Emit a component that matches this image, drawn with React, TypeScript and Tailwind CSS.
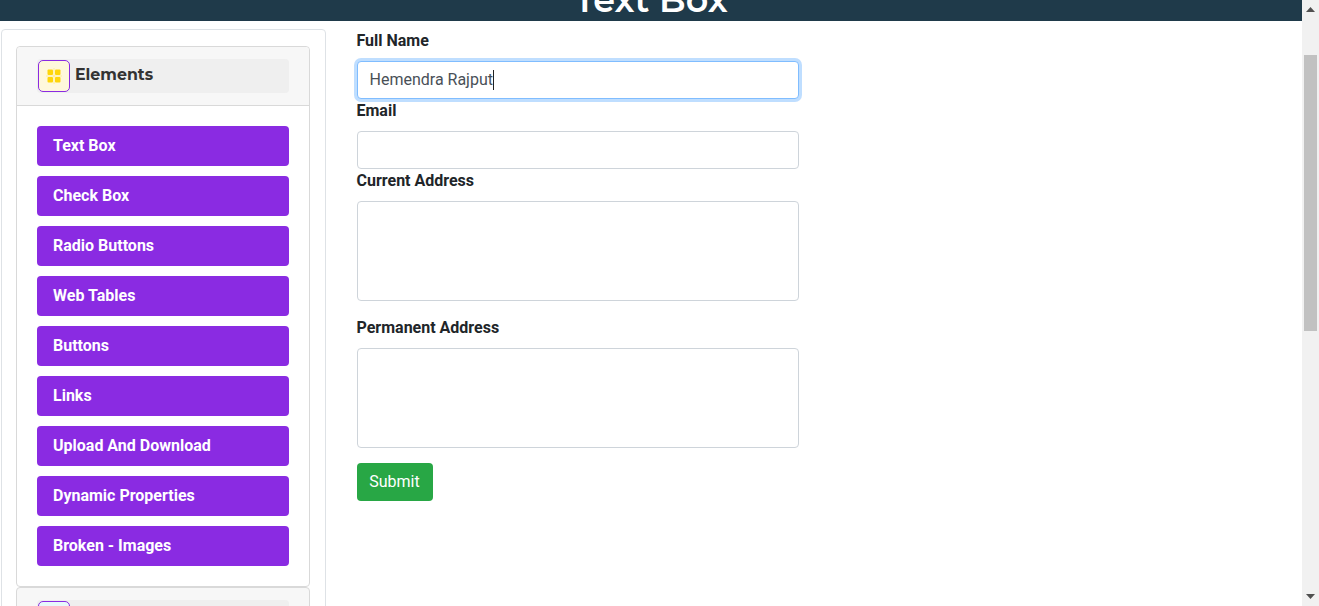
const menuItems = [
  "Text Box",
  "Check Box",
  "Radio Buttons",
  "Web Tables",
  "Buttons",
  "Links",
  "Upload And Download",
  "Dynamic Properties",
  "Broken - Images",
];

const GroupIcon = ({ bg, fill }: { bg: string; fill: string }) => (
  <div className={`flex h-8 w-8 shrink-0 items-center justify-center rounded-[5px] border border-[#8a2be2] ${bg}`}>
    <svg width="16" height="16" viewBox="0 0 16 16">
      <path d="M8 0v16M0 8h16" stroke={fill} strokeOpacity="0.3" strokeWidth="1" />
      <rect x="1.5" y="1.5" width="5.5" height="5.5" rx="1" fill={fill} />
      <rect x="9" y="1.5" width="5.5" height="5.5" rx="1" fill={fill} />
      <rect x="1.5" y="9" width="5.5" height="5.5" rx="1" fill={fill} />
      <rect x="9" y="9" width="5.5" height="5.5" rx="1" fill={fill} />
    </svg>
  </div>
);

const Sidebar = () => (
  <aside className="ml-px mt-2 h-[700px] w-[325px] shrink-0 rounded-t border border-[#dee2e6] bg-white pl-[14px] pr-[15px] pt-4">
    {/* Elements group */}
    <div className="rounded border border-[#d9d9d9] bg-white">
      <div className="h-[59px] rounded-t border-b border-[#d9d9d9] bg-[#f7f7f7] px-5 pt-3">
        <div className="flex h-[34px] items-center rounded bg-[#efefef] pl-px">
          <GroupIcon bg="bg-[#fff8dc]" fill="#ffd60a" />
          <span className="mb-0.5 ml-[5px] font-['Montserrat','Inter',sans-serif] text-[15.8px] font-bold leading-none text-[#333]">
            Elements
          </span>
        </div>
      </div>
      <ul className="flex flex-col gap-[10px] px-5 pb-5 pt-5">
        {menuItems.map((item) => (
          <li
            key={item}
            className="flex h-10 items-center rounded bg-[#8a2be2] pl-4 font-['Roboto',sans-serif] text-base font-bold text-white"
          >
            {item}
          </li>
        ))}
      </ul>
    </div>
    {/* next group, cut off by the window */}
    <div className="rounded-t border border-[#d9d9d9] bg-[#f7f7f7] px-5 pt-3">
      <div className="flex h-[34px] items-center rounded bg-[#efefef] pl-px">
        <GroupIcon bg="bg-[#e6f9fb]" fill="#17a2b8" />
      </div>
    </div>
  </aside>
);

const labelClass = "mb-2 block h-6 font-bold leading-6 text-[#212529]";
const fieldClass = "block w-full rounded border border-[#ced4da] bg-white outline-none";

const TextForm = () => (
  <form className="ml-[30.5px] w-[442.5px] pt-2 font-['Roboto',sans-serif] text-base">
    <label className={labelClass}>Full Name</label>
    <div className="relative">
      <input
        readOnly
        value="Hemendra Rajput"
        className="block h-[38px] w-full rounded border border-[#80bdff] bg-white px-3 pb-0.5 text-[#495057] shadow-[0_0_0_3px_rgba(0,123,255,0.25)] outline-none"
      />
      <span className="absolute left-[136px] top-[9px] h-5 w-px bg-[#222]" />
    </div>
    <label className={labelClass}>Email</label>
    <input readOnly className={`${fieldClass} h-[38px]`} />
    <label className={labelClass}>Current Address</label>
    <textarea readOnly className={`${fieldClass} h-[100px] resize-none`} />
    <label className={`${labelClass} mt-[15px]`}>Permanent Address</label>
    <textarea readOnly className={`${fieldClass} h-[100px] resize-none`} />
    <button
      type="button"
      className="mt-[15px] h-[38px] w-[76px] rounded bg-[#28a745] text-center text-white"
    >
      Submit
    </button>
  </form>
);

const Scrollbar = () => (
  <div className="flex h-full w-[17px] shrink-0 flex-col items-center bg-[#f1f1f1]">
    <svg className="mt-[7px] shrink-0" width="9" height="5" viewBox="0 0 9 5">
      <path d="M4.5 0L9 5H0z" fill="#505050" />
    </svg>
    <div className="mt-[43px] h-[276px] w-[13px] shrink-0 bg-[#c1c1c1]" />
    <div className="flex-1" />
    <svg className="mb-[7px] shrink-0" width="9" height="5" viewBox="0 0 9 5">
      <path d="M4.5 5L0 0h9z" fill="#505050" />
    </svg>
  </div>
);

export default function App() {
  return (
    <div className="flex h-[606px] w-full overflow-hidden bg-white">
      <div className="flex min-w-0 flex-1 flex-col overflow-hidden">
        <header className="flex h-[21px] shrink-0 items-end justify-center overflow-hidden bg-[#1f3a4a]">
          <h1 className="font-['Montserrat','Inter',sans-serif] text-[35px] font-semibold leading-[42px] text-white">
            Text Box
          </h1>
        </header>
        <div className="flex min-h-0 flex-1 overflow-hidden">
          <Sidebar />
          <TextForm />
        </div>
      </div>
      <Scrollbar />
    </div>
  );
}
